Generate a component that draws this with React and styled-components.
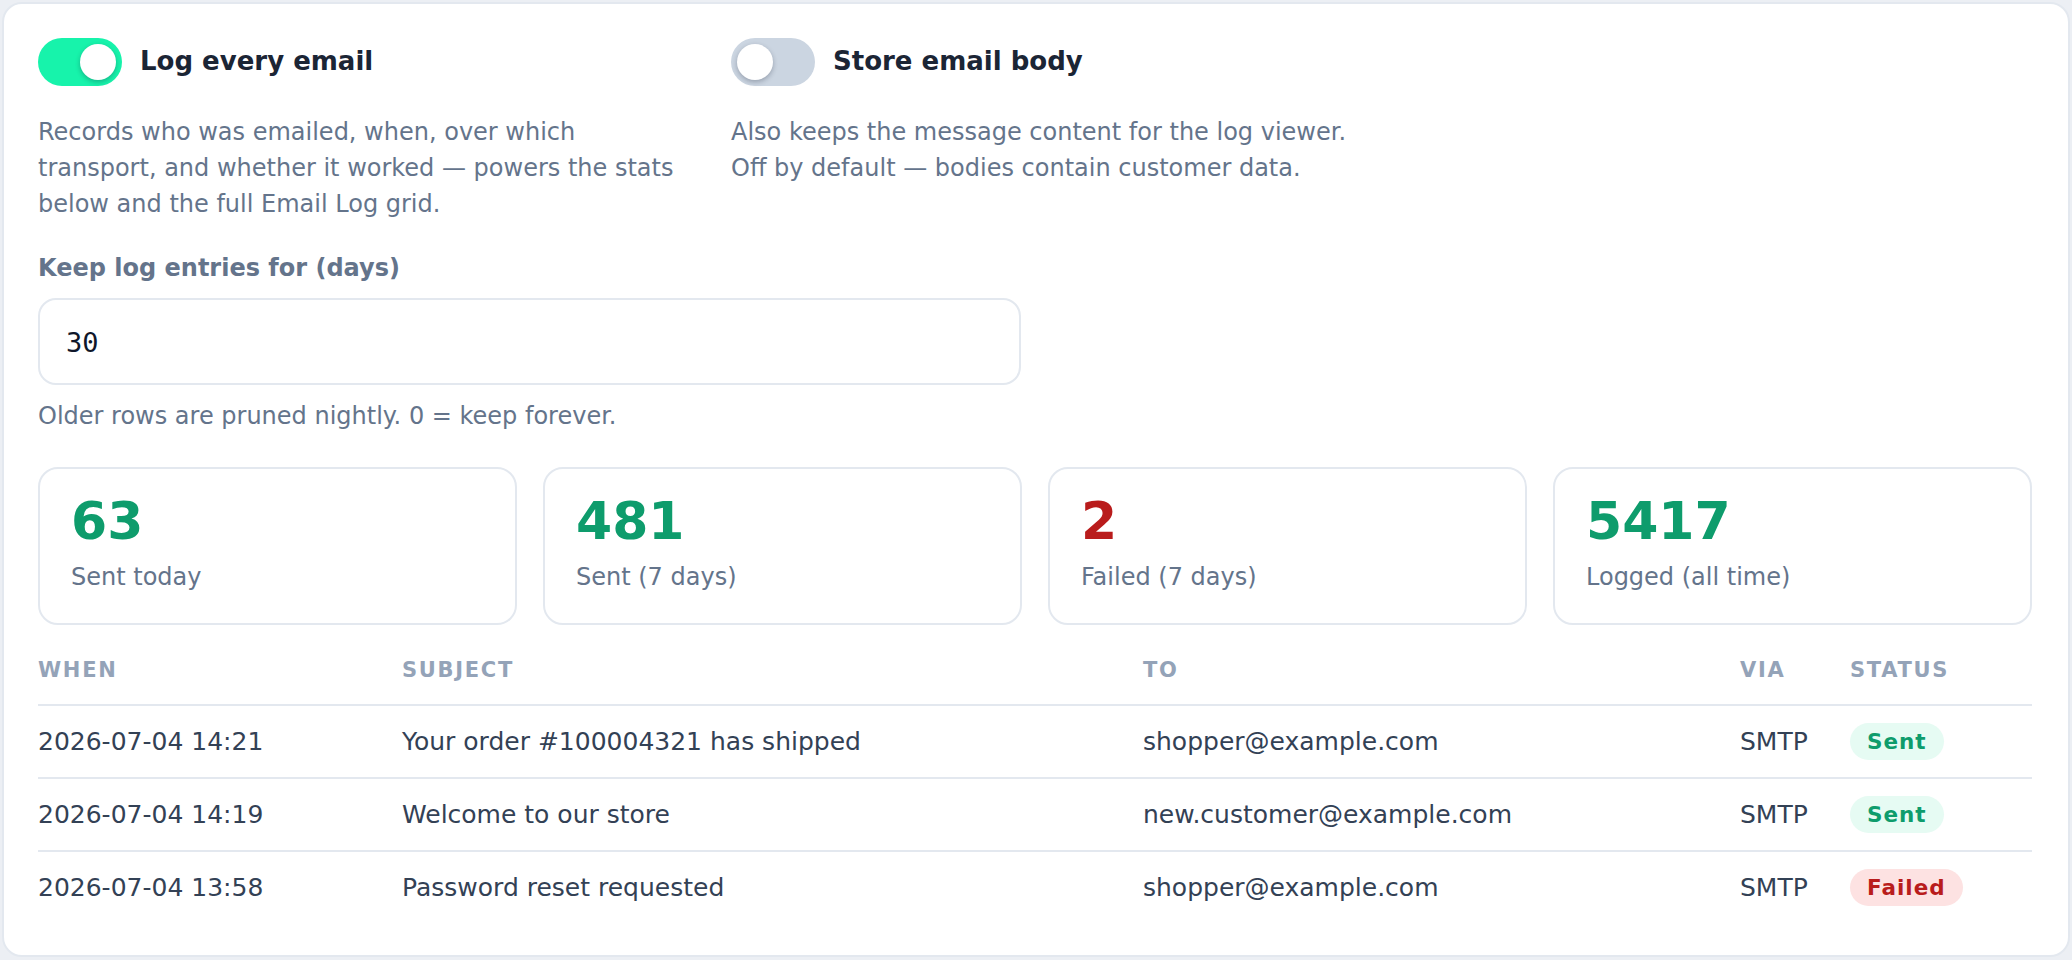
import React from 'react';
import styled, { createGlobalStyle } from 'styled-components';

const GlobalStyle = createGlobalStyle`
  html, body {
    margin: 0;
    background: #eceff4;
  }

  body {
    font-family: 'DejaVu Sans', 'Noto Sans', sans-serif;
    color: #1e293b;
  }

  * {
    box-sizing: border-box;
  }
`;

const Page = styled.div`
  padding: 2px;
`;

const Card = styled.section`
  background: #fff;
  border: 2px solid #e3e8ef;
  border-radius: 20px;
  padding: 34px 36px 32px 34px;
`;

const SettingsGrid = styled.div`
  display: grid;
  grid-template-columns: 645px 645px;
  column-gap: 48px;
`;

const Setting = styled.div`
  display: flex;
  flex-direction: column;
`;

const ToggleRow = styled.label`
  display: flex;
  align-items: center;
  gap: 18px;
`;

const Switch = styled.span`
  position: relative;
  flex: none;
  width: 84px;
  height: 48px;
  border-radius: 24px;
  background: ${p => (p.$on ? '#17f3ab' : '#cbd5e1')};

  &::after {
    content: '';
    position: absolute;
    top: 6px;
    left: ${p => (p.$on ? '42px' : '6px')};
    width: 36px;
    height: 36px;
    border-radius: 50%;
    background: #fff;
    box-shadow: 0 2px 5px rgba(15, 23, 42, 0.28);
  }
`;

const ToggleLabel = styled.span`
  font-size: 26px;
  font-weight: 700;
  color: #1b2535;
  margin-top: -2px;
`;

const Description = styled.p`
  margin: 28px 0 0;
  font-size: 24px;
  line-height: 36px;
  color: #64748b;
`;

const FieldLabel = styled.div`
  margin-top: 28px;
  font-size: 24px;
  line-height: 36px;
  font-weight: 700;
  color: #64748b;
`;

const NumberInput = styled.input`
  display: block;
  margin-top: 12px;
  width: 983px;
  height: 87px;
  padding: 2px 26px 0;
  border: 2px solid #e3e8ef;
  border-radius: 18px;
  background: #fff;
  font-family: 'DejaVu Sans Mono', 'Liberation Mono', monospace;
  font-size: 27px;
  color: #0f172a;
  outline: none;
`;

const Hint = styled.div`
  margin-top: 13px;
  font-size: 24px;
  line-height: 36px;
  color: #64748b;
`;

const StatsGrid = styled.div`
  margin-top: 33px;
  display: grid;
  grid-template-columns: repeat(4, 1fr);
  gap: 26px;
`;

const StatCard = styled.div`
  border: 2px solid #e3e8ef;
  border-radius: 20px;
  padding: 24px 32px 28px 31px;
`;

const StatValue = styled.div`
  font-size: 52px;
  line-height: 57px;
  font-weight: 700;
  color: ${p => (p.$tone === 'bad' ? '#b91c1c' : '#0e9c6c')};
`;

const StatLabel = styled.div`
  margin-top: 9px;
  font-size: 24px;
  line-height: 36px;
  color: #64748b;
`;

const LogTable = styled.table`
  margin-top: 29px;
  width: 100%;
  border-collapse: collapse;
  table-layout: fixed;
`;

const Th = styled.th`
  width: ${p => p.$w || 'auto'};
  padding: 0 0 18px;
  text-align: left;
  font-size: 21px;
  line-height: 32px;
  font-weight: 700;
  letter-spacing: 1.7px;
  text-transform: uppercase;
  color: #94a3b8;
  border-bottom: 2px solid #e3e8ef;
`;

const Row = styled.tr`
  & + & td {
    border-top: 2px solid #e3e8ef;
  }
`;

const Td = styled.td`
  padding: 17px 0;
  font-size: 25px;
  line-height: 36px;
  color: #334155;
  white-space: nowrap;
`;

// inline so the padding paints the pill without growing the row
const Pill = styled.span`
  display: inline;
  padding: 6px 17px;
  border-radius: 19px;
  font-size: 21.5px;
  line-height: 36px;
  font-weight: 700;
  letter-spacing: 1px;
  background: ${p => (p.$ok ? '#e6fbf3' : '#fde2e2')};
  color: ${p => (p.$ok ? '#0e9c6c' : '#b91c1c')};
`;

const stats = [
  { value: '63', label: 'Sent today' },
  { value: '481', label: 'Sent (7 days)' },
  { value: '2', label: 'Failed (7 days)', tone: 'bad' },
  { value: '5417', label: 'Logged (all time)' },
];

const rows = [
  { when: '2026-07-04 14:21', subject: 'Your order #100004321 has shipped', to: 'shopper@example.com', via: 'SMTP', ok: true },
  { when: '2026-07-04 14:19', subject: 'Welcome to our store', to: 'new.customer@example.com', via: 'SMTP', ok: true },
  { when: '2026-07-04 13:58', subject: 'Password reset requested', to: 'shopper@example.com', via: 'SMTP', ok: false },
];

export default function App() {
  return (
    <Page>
      <GlobalStyle />
      <Card>
        <SettingsGrid>
          <Setting>
            <ToggleRow>
              <Switch $on />
              <ToggleLabel>Log every email</ToggleLabel>
            </ToggleRow>
            <Description>
              Records who was emailed, when, over which transport, and whether it worked — powers the stats below and the full Email Log grid.
            </Description>
          </Setting>
          <Setting>
            <ToggleRow>
              <Switch />
              <ToggleLabel>Store email body</ToggleLabel>
            </ToggleRow>
            <Description>
              Also keeps the message content for the log viewer.
              <br />
              Off by default — bodies contain customer data.
            </Description>
          </Setting>
        </SettingsGrid>

        <FieldLabel>Keep log entries for (days)</FieldLabel>
        <NumberInput type="text" defaultValue="30" />
        <Hint>Older rows are pruned nightly. 0 = keep forever.</Hint>

        <StatsGrid>
          {stats.map(s => (
            <StatCard key={s.label}>
              <StatValue $tone={s.tone}>{s.value}</StatValue>
              <StatLabel>{s.label}</StatLabel>
            </StatCard>
          ))}
        </StatsGrid>

        <LogTable>
          <thead>
            <tr>
              <Th $w="364px">When</Th>
              <Th $w="741px">Subject</Th>
              <Th $w="597px">To</Th>
              <Th $w="110px">Via</Th>
              <Th>Status</Th>
            </tr>
          </thead>
          <tbody>
            {rows.map(r => (
              <Row key={r.when}>
                <Td>{r.when}</Td>
                <Td>{r.subject}</Td>
                <Td>{r.to}</Td>
                <Td>{r.via}</Td>
                <Td>
                  <Pill $ok={r.ok}>{r.ok ? 'Sent' : 'Failed'}</Pill>
                </Td>
              </Row>
            ))}
          </tbody>
        </LogTable>
      </Card>
    </Page>
  );
}
